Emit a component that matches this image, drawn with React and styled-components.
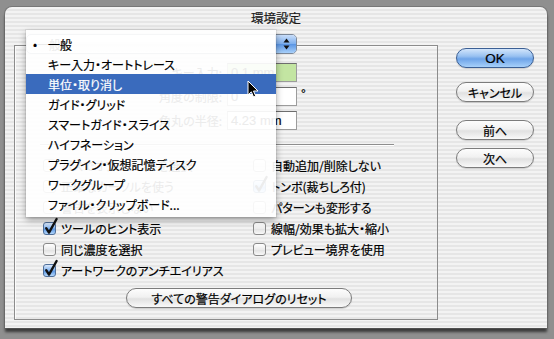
import React from 'react';
import styled, { createGlobalStyle, css } from 'styled-components';

const Global = createGlobalStyle`
  html, body { margin: 0; padding: 0; }
  body {
    width: 554px; height: 339px; overflow: hidden;
    background: #8f8f8f;
    font-family: "Noto Sans CJK JP", "Liberation Sans", sans-serif;
    font-feature-settings: "palt";
    color: #000;
    -webkit-text-stroke: 0.2px currentColor;
  }
`;

const stripes = `repeating-linear-gradient(to bottom, #f3f3f3 0px, #f3f3f3 2px, #e6e6e6 2px, #e6e6e6 4px)`;

const Desktop = styled.div`
  padding: 7px 0 0 5px;
`;

const Window = styled.div`
  position: relative;
  width: 542px;
  height: 321px;
  box-sizing: border-box;
  background: ${stripes};
  border-radius: 7px 7px 0 0;
  box-shadow: 0 0 0 1px rgba(100, 100, 100, 0.55), 0 4px 3px rgba(0, 0, 0, 0.6);
  display: flex;
  flex-direction: column;
`;

const TitleBar = styled.div`
  height: 20px;
  padding-bottom: 1px;
  display: flex;
  align-items: center;
  justify-content: center;
  font-size: 12.5px;
  color: #1a1a1a;
`;

const Body = styled.div`
  flex: 1;
  display: flex;
  padding: 17px 0 0 9px;
`;

const GroupBox = styled.div`
  width: 424px;
  height: 275px;
  box-sizing: border-box;
  border: 1px solid #8c8c8c;
  box-shadow: inset 1px 1px 0 rgba(255, 255, 255, 0.8);
  display: flex;
  flex-direction: column;
  align-items: flex-start;
`;

const Popup = styled.div`
  margin: -12px 0 0 11px;
  width: 271px;
  height: 20px;
  box-sizing: border-box;
  border: 1px solid #7b8798;
  border-radius: 5px;
  overflow: hidden;
  display: flex;
  background: linear-gradient(#ffffff, #f0f0f0 50%, #e2e2e2 51%, #f7f7f7);
  font-size: 12px;
`;

const PopupLabel = styled.div`
  flex: 1;
  display: flex;
  align-items: center;
  padding-left: 10px;
`;

const PopupArrows = styled.div`
  width: 20px;
  border-left: 1px solid #3d6aa8;
  background: linear-gradient(#c9defa, #7fb0ee 48%, #5a95e4 52%, #a8d0fa);
  display: flex;
  align-items: center;
  justify-content: center;
`;

const FieldGrid = styled.div`
  margin-top: 9px;
  display: grid;
  grid-template-columns: 207px 70px auto;
  column-gap: 5px;
  row-gap: 5px;
  align-items: center;
`;

const FieldLabel = styled.div`
  text-align: right;
  font-size: 12px;
`;

const Field = styled.div`
  width: 70px;
  height: 19px;
  box-sizing: border-box;
  border: 1px solid #9c9c9c;
  border-top-color: #6e6e6e;
  background: ${p => (p.$green ? '#c3e5a2' : '#ffffff')};
  font-family: "Liberation Sans", sans-serif;
  font-size: 13px;
  padding-left: 3px;
  display: flex;
  align-items: center;
`;

const Unit = styled.div`
  font-family: "Liberation Sans", sans-serif;
  font-size: 12px;
  margin-left: -1px;
  margin-top: -6px;
`;

const Separator = styled.div`
  margin: 14px 0 0 25px;
  width: 354px;
  height: 1px;
  background: #8e8e8e;
  box-shadow: 0 1px 0 #ffffff;
`;

const CheckGrid = styled.div`
  margin: 10px 0 0 28px;
  display: grid;
  grid-template-columns: 210px 170px;
  grid-auto-flow: column;
  grid-template-rows: repeat(6, 21px);
`;

const CheckRow = styled.div`
  display: flex;
  align-items: center;
  gap: 5px;
  font-size: 12px;
  white-space: nowrap;
`;

const Box = styled.span`
  position: relative;
  width: 13px;
  height: 13px;
  box-sizing: border-box;
  flex: none;
  border: 1px solid #8a8a8a;
  border-radius: 3px;
  ${p =>
    p.$checked
      ? css`
          border-color: #4f6f9a;
          background: linear-gradient(#dbe9fb, #8ab8f0 45%, #5b97e4 55%, #b4d7fb);
        `
      : css`
          background: linear-gradient(#ffffff, #ececec 50%, #e0e0e0 51%, #f8f8f8);
        `}
`;

const Tick = styled.svg`
  position: absolute;
  left: 0px;
  top: -5px;
  overflow: visible;
`;

const ResetButton = styled.div`
  margin: 7px 0 0 111px;
  width: 226px;
  height: 20px;
`;

const Pill = styled.div`
  width: 100%;
  height: 100%;
  box-sizing: border-box;
  border-radius: 10px;
  border: 1px solid #7c7c7c;
  background: linear-gradient(#fdfdfd, #f1f1f1 45%, #e1e1e1 55%, #f9f9f9);
  box-shadow: 0 1px 1px rgba(0, 0, 0, 0.15);
  display: flex;
  align-items: center;
  justify-content: center;
  font-size: 12px;
  ${p =>
    p.$default &&
    css`
      border-color: #3b5f94;
      background: linear-gradient(#d2e5fb, #98c1f1 40%, #6ea4e8 55%, #a7d0fa);
      font-family: "Liberation Sans", sans-serif;
      font-size: 13.5px;
    `}
`;

const ButtonColumn = styled.div`
  margin-left: 18px;
  padding-top: 3px;
  display: flex;
  flex-direction: column;
`;

const SideButton = styled.div`
  width: 78px;
  height: 20px;
  margin-top: ${p => p.$gap || 0}px;
`;

const Menu = styled.div`
  position: absolute;
  left: 21px;
  top: 23px;
  width: 250px;
  padding: 4px 0 3px;
  background: rgba(255, 255, 255, 0.92);
  box-shadow: 0 3px 7px rgba(0, 0, 0, 0.35), 0 0 0 1px rgba(0, 0, 0, 0.06);
  z-index: 5;
`;

const MenuItem = styled.div`
  position: relative;
  height: 20px;
  padding-left: 22px;
  display: flex;
  align-items: center;
  font-size: 12px;
  white-space: nowrap;
  ${p =>
    p.$active &&
    css`
      background: #3a6bbd;
      color: #ffffff;
    `}
`;

const Bullet = styled.span`
  position: absolute;
  left: 7px;
  top: 0;
  line-height: 20px;
  font-size: 12px;
`;

const Cursor = styled.svg`
  position: absolute;
  left: 242px;
  top: 73px;
  z-index: 6;
  overflow: visible;
`;

function Check({ checked, label }) {
  return (
    <CheckRow>
      <Box $checked={checked}>
        {checked && (
          <Tick width="14" height="17" viewBox="0 0 14 17">
            <path d="M2.2 10.2 L5 14.6 L12.6 1" fill="none" stroke="#111" strokeWidth="2.4" strokeLinecap="round" strokeLinejoin="round" />
          </Tick>
        )}
      </Box>
      <span>{label}</span>
    </CheckRow>
  );
}

const menuItems = [
  '一般',
  'キー入力・オートトレース',
  '単位・取り消し',
  'ガイド・グリッド',
  'スマートガイド・スライス',
  'ハイフネーション',
  'プラグイン・仮想記憶ディスク',
  'ワークグループ',
  'ファイル・クリップボード...',
];

const leftChecks = [
  ['パスでオブジェクトを選択', false],
  ['正確なカーソルを使う', false],
  ['警告を表示しない', false],
  ['ツールのヒント表示', true],
  ['同じ濃度を選択', false],
  ['アートワークのアンチエイリアス', true],
];

const rightChecks = [
  ['自動追加/削除しない', false],
  ['トンボ(裁ちしろ付)', true],
  ['パターンも変形する', false],
  ['線幅/効果も拡大・縮小', false],
  ['プレビュー境界を使用', false],
];

export default function App() {
  return (
    <>
      <Global />
      <Desktop>
        <Window>
          <TitleBar>環境設定</TitleBar>
          <Body>
            <GroupBox>
              <Popup>
                <PopupLabel>一般</PopupLabel>
                <PopupArrows>
                  <svg width="7" height="12" viewBox="0 0 7 12">
                    <path d="M3.5 0.5 L6.5 4.5 L0.5 4.5 Z" fill="#111" />
                    <path d="M3.5 11.5 L6.5 7.5 L0.5 7.5 Z" fill="#111" />
                  </svg>
                </PopupArrows>
              </Popup>
              <FieldGrid>
                <FieldLabel>キー入力:</FieldLabel>
                <Field $green>0.1 mm</Field>
                <span />
                <FieldLabel>角度の制限:</FieldLabel>
                <Field>0</Field>
                <Unit>°</Unit>
                <FieldLabel>角丸の半径:</FieldLabel>
                <Field>4.23 mm</Field>
                <span />
              </FieldGrid>
              <Separator />
              <CheckGrid>
                {leftChecks.map(([l, c]) => (
                  <Check key={l} label={l} checked={c} />
                ))}
                {rightChecks.map(([l, c]) => (
                  <Check key={l} label={l} checked={c} />
                ))}
              </CheckGrid>
              <ResetButton>
                <Pill>すべての警告ダイアログのリセット</Pill>
              </ResetButton>
            </GroupBox>
            <ButtonColumn>
              <SideButton><Pill $default>OK</Pill></SideButton>
              <SideButton $gap={14}><Pill>キャンセル</Pill></SideButton>
              <SideButton $gap={18}><Pill>前へ</Pill></SideButton>
              <SideButton $gap={8}><Pill>次へ</Pill></SideButton>
            </ButtonColumn>
          </Body>
          <Menu>
            {menuItems.map((t, i) => (
              <MenuItem key={t} $active={i === 2}>
                {i === 0 && <Bullet>•</Bullet>}
                {t}
              </MenuItem>
            ))}
          </Menu>
          <Cursor width="12" height="18" viewBox="0 0 12 18">
            <path d="M1 1 L1 15 L4.3 11.8 L6.6 17 L8.7 16.1 L6.5 11 L11 11 Z" fill="#000" stroke="#fff" strokeWidth="1" strokeLinejoin="round" />
          </Cursor>
        </Window>
      </Desktop>
    </>
  );
}
